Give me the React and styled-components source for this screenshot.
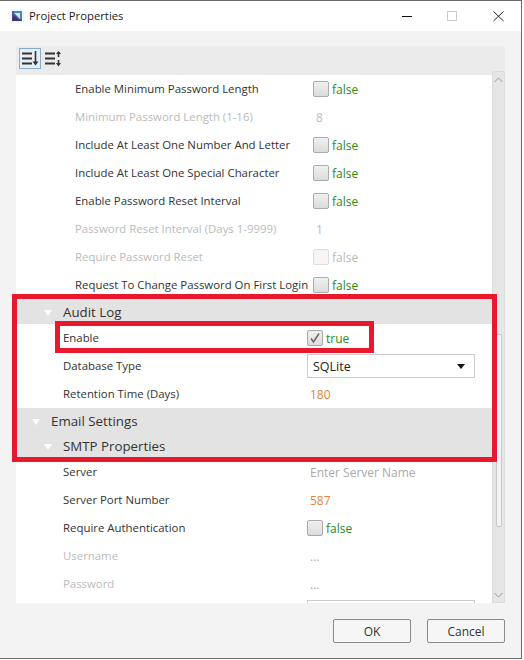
import React from 'react'
import styled, { createGlobalStyle } from 'styled-components'

const passwordRows = [
  { label: 'Enable Minimum Password Length', type: 'check', value: 'false' },
  { label: 'Minimum Password Length (1-16)', type: 'plain', value: '8', off: true },
  { label: 'Include At Least One Number And Letter', type: 'check', value: 'false' },
  { label: 'Include At Least One Special Character', type: 'check', value: 'false' },
  { label: 'Enable Password Reset Interval', type: 'check', value: 'false' },
  { label: 'Password Reset Interval (Days 1-9999)', type: 'plain', value: '1', off: true },
  { label: 'Require Password Reset', type: 'check', value: 'false', off: true },
  { label: 'Request To Change Password On First Login', type: 'check', value: 'false' },
]

const auditRows = [
  { label: 'Enable', type: 'check', value: 'true', checked: true },
  { label: 'Database Type', type: 'combo', value: 'SQLite' },
  { label: 'Retention Time (Days)', type: 'number', value: '180' },
]

const smtpRows = [
  { label: 'Server', type: 'hint', value: 'Enter Server Name' },
  { label: 'Server Port Number', type: 'number', value: '587' },
  { label: 'Require Authentication', type: 'check', value: 'false' },
  { label: 'Username', type: 'hint', value: '...', off: true },
  { label: 'Password', type: 'hint', value: '...', off: true },
]

const Value = ({ row, inset }) => {
  if (row.type === 'check') {
    return (
      <CheckWrap $inset={inset}>
        <Check $off={row.off}>
          {row.checked && (
            <svg width="14" height="14" viewBox="0 0 14 14">
              <path d="M3 7.5 L5.5 11 L11 2.5" fill="none" stroke="#666" strokeWidth="1.5" />
            </svg>
          )}
        </Check>
        <BoolText $off={row.off}>{row.value}</BoolText>
      </CheckWrap>
    )
  }
  if (row.type === 'combo') {
    return (
      <Combo>
        {row.value}
        <ComboArrow />
      </Combo>
    )
  }
  if (row.type === 'number') return <NumberText $inset={inset}>{row.value}</NumberText>
  if (row.type === 'hint') return <HintText $inset={inset}>{row.value}</HintText>
  return <PlainText $inset={inset}>{row.value}</PlainText>
}

const Rows = ({ rows, indent, inset }) =>
  rows.map((row) => (
    <Row key={row.label}>
      <Label $indent={indent} $off={row.off}>{row.label}</Label>
      <Value row={row} inset={inset} />
    </Row>
  ))

const App = () => {
  return (
    <Dialog>
      <GlobalStyle />
      <TitleBar>
        <Logo>
          <svg width="14" height="14" viewBox="0 0 14 14">
            <rect width="14" height="14" fill="#f4f4f8" />
            <path d="M2 2 H12 V12 H2 Z" fill="#5b4f96" />
            <path d="M4 2 H12 V10 H10 V4 H4 Z" fill="#3d8fb5" />
            <path d="M4 4 H10 V10 Z" fill="#cfe6ef" />
            <path d="M2 12 L3.5 6 L8.5 11 L12 12 Z" fill="#3a3468" />
          </svg>
        </Logo>
        <Title>Project Properties</Title>
        <WinButtons>
          <svg width="112" height="12" viewBox="0 0 112 12">
            <path d="M0 6.5 H10" stroke="#111" fill="none" />
            <rect x="45.5" y="1.5" width="9" height="9" stroke="#ccc" fill="none" />
            <path d="M91.5 1.5 L101.5 11 M101.5 1.5 L91.5 11" stroke="#222" fill="none" />
          </svg>
        </WinButtons>
      </TitleBar>
      <Body>
        <Panel>
          <Toolbar>
            <ToolButton $active>
              <svg width="18" height="16" viewBox="0 0 18 16">
                <path d="M1 2.5 H11 M1 7.5 H11 M1 12.5 H11" stroke="#333" strokeWidth="2" fill="none" />
                <path d="M14.5 0 V11" stroke="#333" strokeWidth="1.6" fill="none" />
                <path d="M11.5 10.5 H17.5 L14.5 14.5 Z" fill="#333" />
              </svg>
            </ToolButton>
            <ToolButton>
              <svg width="18" height="16" viewBox="0 0 18 16">
                <path d="M1 2.5 H11 M1 7.5 H11 M1 12.5 H11" stroke="#333" strokeWidth="2" fill="none" />
                <path d="M14.5 1 V6 M14.5 9 V14" stroke="#333" strokeWidth="1.6" fill="none" />
                <path d="M12 3 L14.5 0 L17 3 Z M12 12 H17 L14.5 15.5 Z" fill="#333" />
              </svg>
            </ToolButton>
          </Toolbar>
          <ListArea>
            <List>
              <Rows rows={passwordRows} indent={59} inset={6} />
              <GroupHeader $height={25} $indent={47}>
                <Arrow $left={28} />
                Audit Log
              </GroupHeader>
              <Rows rows={auditRows} indent={47} inset={0} />
              <GroupHeader $height={26} $indent={35}>
                <Arrow $left={16} />
                Email Settings
              </GroupHeader>
              <GroupHeader $height={24} $indent={47}>
                <Arrow $left={28} />
                SMTP Properties
              </GroupHeader>
              <Rows rows={smtpRows} indent={47} inset={0} />
              <Row>
                <Label $indent={47} />
                <Combo />
              </Row>
            </List>
            <ScrollBar>
              <ScrollStep>
                <svg width="9" height="6" viewBox="0 0 9 6">
                  <path d="M0.5 5 L4.5 1 L8.5 5" stroke="#999" fill="none" />
                </svg>
              </ScrollStep>
              <ScrollThumb />
              <ScrollStep>
                <svg width="9" height="6" viewBox="0 0 9 6">
                  <path d="M0.5 1 L4.5 5 L8.5 1" stroke="#999" fill="none" />
                </svg>
              </ScrollStep>
            </ScrollBar>
          </ListArea>
        </Panel>
        <Footer>
          <DialogButton>OK</DialogButton>
          <DialogButton>Cancel</DialogButton>
        </Footer>
      </Body>
      <OuterMark />
      <InnerMark />
    </Dialog>
  )
}

export default App

const GlobalStyle = createGlobalStyle`
  html, body {
    margin: 0;
    background: #fff;
  }
  * {
    box-sizing: border-box;
  }
`

const Dialog = styled.div`
  position: relative;
  width: 522px;
  height: 659px;
  border-top: 1px solid #6b6b6b;
  border-right: 1px solid #6b6b6b;
  border-bottom: 1px solid #6b6b6b;
  display: flex;
  flex-direction: column;
  overflow: hidden;
  font-family: "Open Sans", "Noto Sans", sans-serif;
  color: #333;
  background: #f3f3f3;
`

const TitleBar = styled.div`
  height: 30px;
  flex: none;
  background: #fff;
  display: flex;
  align-items: center;
  padding-left: 10px;
`

const Logo = styled.div`
  width: 14px;
  height: 14px;
  display: flex;
  margin-right: 5px;
`

const Title = styled.div`
  font-size: 11.3px;
  color: #222;
  flex: 1;
  padding-bottom: 2px;
`

const WinButtons = styled.div`
  display: flex;
  width: 119px;
  margin-top: -1px;
`

const Body = styled.div`
  flex: 1;
  display: flex;
  flex-direction: column;
  padding: 15px 16px 0;
  min-height: 0;
`

const Panel = styled.div`
  height: 557px;
  flex: none;
  display: flex;
  flex-direction: column;
`

const Toolbar = styled.div`
  height: 29px;
  flex: none;
  background: #ebebeb;
  border-radius: 2px 2px 0 0;
  display: flex;
  align-items: flex-start;
  padding: 2px 0 0 3px;
  gap: 1px;
`

const ToolButton = styled.div`
  width: 22px;
  height: 21px;
  display: flex;
  align-items: center;
  justify-content: center;
  border: 1px solid ${(p) => (p.$active ? '#86aec8' : 'transparent')};
  background: ${(p) => (p.$active ? '#e6eff5' : 'transparent')};
`

const ListArea = styled.div`
  flex: 1;
  min-height: 0;
  display: grid;
  grid-template-columns: 476px 13px;
`

const List = styled.div`
  background: #fff;
  overflow: hidden;
  font-size: 12px;
`

const Row = styled.div`
  height: 28px;
  display: grid;
  grid-template-columns: 291px 1fr;
  align-items: center;
`

const Label = styled.div`
  padding-left: ${(p) => p.$indent}px;
  padding-bottom: 1px;
  font-size: 11.4px;
  color: ${(p) => (p.$off ? '#bbb' : '#333')};
  white-space: nowrap;
`

const CheckWrap = styled.div`
  display: flex;
  align-items: center;
  padding-left: ${(p) => p.$inset}px;
  gap: 3px;
`

const Check = styled.div`
  width: 16px;
  height: 16px;
  display: flex;
  align-items: center;
  justify-content: center;
  border-radius: 2px;
  border: 1px solid ${(p) => (p.$off ? '#ddd' : '#aaa')};
  background: ${(p) =>
    p.$off ? '#f6f6f6' : 'linear-gradient(#f0f0f0, #dcdcdc)'};
`

const BoolText = styled.span`
  color: ${(p) => (p.$off ? '#bbb' : '#2c8a1c')};
`

const PlainText = styled.span`
  padding-left: ${(p) => p.$inset + 3}px;
  color: #bbb;
`

const NumberText = styled.span`
  padding-left: ${(p) => p.$inset + 3}px;
  color: #dd8443;
`

const HintText = styled.span`
  padding-left: ${(p) => p.$inset + 3}px;
  color: #aaa;
`

const Combo = styled.div`
  position: relative;
  width: 168px;
  height: 24px;
  border: 1px solid #ccc;
  background: #fff;
  color: #222;
  font-size: 12.5px;
  line-height: 23px;
  padding-left: 5px;
`

const ComboArrow = styled.span`
  position: absolute;
  right: 9px;
  top: 9px;
  border-style: solid;
  border-width: 5px 4px 0;
  border-color: #111 transparent transparent;
`

const GroupHeader = styled.div`
  position: relative;
  height: ${(p) => p.$height}px;
  background: #e3e3e3;
  display: flex;
  align-items: center;
  padding-left: ${(p) => p.$indent}px;
  font-size: 13.3px;
  color: #333;
`

const Arrow = styled.span`
  position: absolute;
  left: ${(p) => p.$left}px;
  top: 50%;
  margin-top: -2px;
  border-style: solid;
  border-width: 6px 4px 0;
  border-color: #fff transparent transparent;
`

const ScrollBar = styled.div`
  margin-top: -4px;
  position: relative;
  display: flex;
  flex-direction: column;
  align-items: center;
  background: #e6e6e6;
  border: 1px solid #dcdcdc;
  border-radius: 2px 2px 0 0;
`

const ScrollStep = styled.div`
  height: 15px;
  flex: none;
  width: 100%;
  display: flex;
  align-items: center;
  justify-content: center;
`

const ScrollThumb = styled.div`
  width: 6px;
  height: 193px;
  margin-top: 247px;
  margin-bottom: auto;
  background: #f2f2f2;
  border: 1px solid #c8c8c8;
  border-radius: 2px;
`

const Footer = styled.div`
  flex: 1;
  display: flex;
  justify-content: flex-end;
  gap: 16px;
  padding-top: 16px;
`

const DialogButton = styled.div`
  width: 78px;
  height: 24px;
  border: 1px solid #8a8a8a;
  border-radius: 2px;
  background: #f6f6f6;
  font-size: 12px;
  color: #333;
  display: flex;
  align-items: center;
  justify-content: center;
`

const OuterMark = styled.div`
  position: absolute;
  left: 12px;
  top: 293px;
  width: 485px;
  height: 168px;
  border: 5px solid #e8192c;
  pointer-events: none;
`

const InnerMark = styled.div`
  position: absolute;
  left: 55px;
  top: 320px;
  width: 319px;
  height: 32px;
  border: 5px solid #e8192c;
  pointer-events: none;
`
